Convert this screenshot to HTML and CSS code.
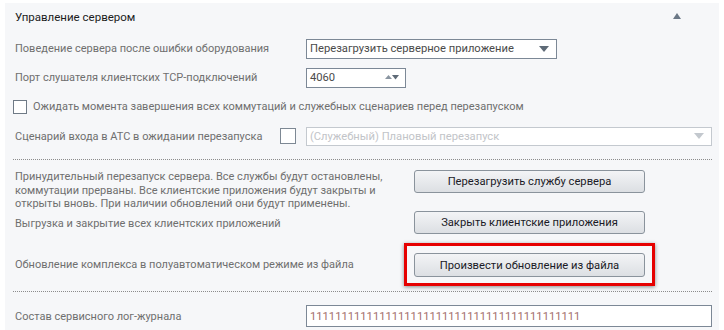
FILE: index.html
```html
<!DOCTYPE html>
<html lang="ru">
<head>
<meta charset="utf-8">
<link rel="stylesheet" href="styles.css">
</head>
<body>
<div class="panel">
  <div class="header">
    <span class="title">Управление сервером</span>
    <svg class="collapse" width="8" height="6" viewBox="0 0 8 6"><path d="M4 0 L8 6 L0 6 Z" fill="#6b7886"/></svg>
  </div>

  <div class="row">
    <span class="label">Поведение сервера после ошибки оборудования</span>
    <div class="select w250"><span class="val">Перезагрузить серверное приложение</span><svg class="arrow" width="10" height="6" viewBox="0 0 10 6"><path d="M0 0 L10 0 L5 6 Z" fill="#5e6a77"/></svg></div>
  </div>
  <div class="row">
    <span class="label">Порт слушателя клиентских TCP-подключений</span>
    <div class="select w99"><span class="val">4060</span><svg class="spin" width="14" height="5" viewBox="0 0 14 5"><path d="M3.5 0 L7 4 L0 4 Z" fill="#8a95a1"/><path d="M7 0 L14 0 L10.5 4.5 Z" fill="#5e6a77"/></svg></div>
  </div>
  <div class="row check-row">
    <span class="box"></span>
    <span class="label">Ожидать момента завершения всех коммутаций и служебных сценариев перед перезапуском</span>
  </div>
  <div class="row row4">
    <span class="label lbl-short">Сценарий входа в АТС в ожидании перезапуска</span>
    <span class="box box-lg"></span>
    <div class="select disabled wide"><span class="val">(Служебный) Плановый перезапуск</span><svg class="arrow" width="10" height="6" viewBox="0 0 10 6"><path d="M0 0 L10 0 L5 6 Z" fill="#c3c8ce"/></svg></div>
  </div>

  <div class="sep"></div>

  <div class="actions">
    <div class="act act1">
      <p class="desc">Принудительный перезапуск сервера. Все службы будут остановлены,<br>коммутации прерваны. Все клиентские приложения будут закрыты и<br>открыты вновь. При наличии обновлений они будут применены.</p>
      <button class="btn">Перезагрузить службу сервера</button>
    </div>
    <div class="act act2">
      <p class="desc">Выгрузка и закрытие всех клиентских приложений</p>
      <button class="btn">Закрыть клиентские приложения</button>
    </div>
    <div class="act act3">
      <p class="desc">Обновление комплекса в полуавтоматическом режиме из файла</p>
      <div class="highlight"><button class="btn">Произвести обновление из файла</button></div>
    </div>
  </div>

  <div class="sep sep2"></div>

  <div class="row logrow">
    <span class="label">Состав сервисного лог-журнала</span>
    <div class="input wide"><span class="ones">1111111111111111111111111111111111111111111</span></div>
  </div>
</div>
</body>
</html>
```

FILE: styles.css
```css
html, body {
  margin: 0;
  padding: 0;
  background: #ffffff;
}
body {
  font-family: Roboto, "Liberation Sans", sans-serif;
  font-size: 11px;
  color: #6f6f6f;
  padding: 3px 5px 0 5px;
  width: 724px;
  height: 330px;
  box-sizing: border-box;
  overflow: hidden;
}
.panel {
  background: #f6f7f9;
  height: 330px;
  padding: 0 7px 0 8px;
}
.header {
  height: 31px;
  display: flex;
  align-items: center;
  justify-content: space-between;
  padding: 0 0 4px 2px;
  box-sizing: border-box;
}
.title {
  color: #1c1c1c;
  font-size: 11.5px;
}
.collapse {
  margin-right: 31px;
  margin-top: -2px;
}
.row {
  display: flex;
  align-items: center;
  height: 29px;
}
.label {
  padding-left: 2px;
  width: 291px;
  flex: none;
  white-space: nowrap;
}
.select, .input {
  height: 20px;
  box-sizing: border-box;
  border: 1px solid #7c8896;
  background: #ffffff;
  display: flex;
  align-items: center;
  justify-content: space-between;
  padding: 0 6px 0 3px;
  color: #4a4a4a;
  font-size: 11.2px;
}
.w250 { width: 251px; }
.w99 { width: 100px; }
.wide { width: 407px; }
.arrow {
  flex: none;
  margin-right: 1px;
}
.spin {
  flex: none;
  margin-right: 0;
}
.check-row .label {
  padding-left: 6px;
  width: auto;
}
.box {
  width: 14px;
  height: 14px;
  box-sizing: border-box;
  border: 1px solid #6f7a86;
  background: #ffffff;
  flex: none;
}
.row4 { height: 30px; }
.lbl-short { width: 265px; }
.box-lg {
  width: 16px;
  height: 16px;
  margin-right: 10px;
  border-color: #7d8894;
}
.select.disabled {
  height: 19px;
  border-color: #c4c9cf;
  color: #c2c4c8;
}
.sep {
  margin: 8px 0 0 0;
  border-top: 1px dotted #8c8c8c;
  width: 699px;
}
.actions {
  padding-top: 10px;
}
.act {
  display: flex;
  align-items: flex-start;
}
.desc {
  margin: 0;
  padding-left: 2px;
  width: 399px;
  flex: none;
  line-height: 13.5px;
  white-space: nowrap;
}
.act1 { height: 41px; }
.act2 {
  height: 23px;
  align-items: center;
}
.act2 .desc { margin-top: 3px; }
.act3 {
  margin-top: 19px;
  height: 24px;
  align-items: center;
}
.btn {
  width: 231px;
  height: 24px;
  border: 1px solid #8a939c;
  border-radius: 3px;
  background: linear-gradient(#f3f4f6, #dcdfe3);
  font-family: Roboto, "Liberation Sans", sans-serif;
  font-size: 11.2px;
  color: #1a1a26;
  padding: 0;
  flex: none;
}
.act1 .btn, .act2 .btn { height: 23px; }
.highlight {
  position: relative;
  display: flex;
}
.highlight::after {
  content: "";
  position: absolute;
  left: -10px;
  right: -10px;
  top: -10px;
  bottom: -9px;
  border: 3px solid #e60000;
  box-shadow: 0 1px 4px rgba(0, 0, 0, 0.45);
}
.sep2 { margin-top: 14px; }
.logrow {
  margin-top: 13px;
  height: 22px;
}
.input {
  height: 22px;
}
.ones {
  color: #a4706c;
}
```
